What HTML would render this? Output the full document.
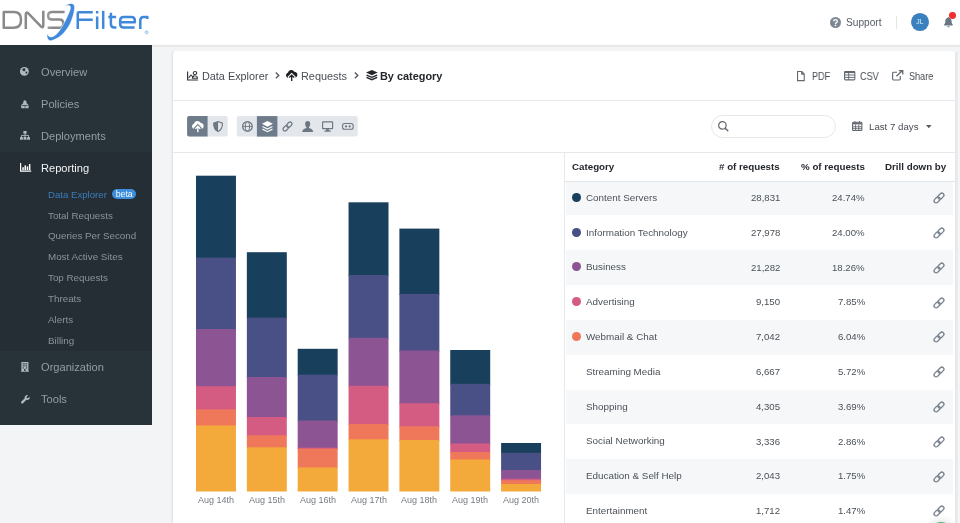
<!DOCTYPE html>
<html>
<head>
<meta charset="utf-8">
<title>DNSFilter - Data Explorer</title>
<style>
*{box-sizing:border-box;margin:0;padding:0}
html,body{width:960px;height:523px;overflow:hidden}
body{position:relative;background:#f3f4f6;font-family:"Liberation Sans",sans-serif;color:#4a5058}
svg{display:block;overflow:visible;position:absolute}
#hdr{position:absolute;left:0;top:0;width:960px;height:45px;background:#fff}
#hdrline{position:absolute;left:0;top:45px;width:960px;height:2px;background:linear-gradient(#e3e4e5,#ebecee)}
#side{position:absolute;left:0;top:45px;width:152px;height:379.7px;background:#283339}
#sidedark{position:absolute;left:0;top:107px;width:152px;height:199px;background:#252e34}
.mi{position:absolute;left:41.3px;font-size:11.1px;line-height:12px;color:#939da4;white-space:nowrap}
.mi.on{color:#f2f4f5}
.si{position:absolute;left:48.3px;font-size:9.8px;line-height:11px;color:#8a939a;white-space:nowrap}
.si.on{color:#3b7dbc;font-size:9.65px}
#card{position:absolute;left:173px;top:51px;width:782px;height:490px;background:#fff;border-radius:3px;box-shadow:-1.5px 0 0 #e3e6e9}
.t,.mi,.si,.th,.row div,.xl{will-change:transform}
.hl{position:absolute;left:173px;width:782px;height:1px;background:#e6e9ec}
.t{position:absolute;white-space:nowrap;line-height:12px}
.bc{font-size:10.8px;color:#3c4248}
.ex{font-size:10.3px;color:#474d54;transform:scaleX(.885);transform-origin:0 50%}
.btn{position:absolute;top:116.3px;height:20.2px;background:#e3e7eb}
.btn.on{background:#6d7b8a}
.th{position:absolute;top:161.1px;font-size:9.75px;line-height:12px;font-weight:bold;color:#23272c;white-space:nowrap}
.row{position:absolute;left:566.3px;width:387.1px;height:34.8px}
.row.g{background:#f5f7f9}
.row .dot{position:absolute;left:6px;top:12.2px;width:8.8px;height:8.8px;border-radius:50%}
.row .c{position:absolute;left:20px;top:11.2px;font-size:9.85px;line-height:12px;color:#4b5158;white-space:nowrap}
.row .n{position:absolute;right:173.5px;top:11.4px;font-size:9.6px;line-height:12px;color:#4b5158;white-space:nowrap}
.row .p{position:absolute;right:88.6px;top:11.4px;font-size:9.6px;line-height:12px;color:#4b5158;white-space:nowrap}
.row svg{left:366.3px;top:11.5px}
.xl{position:absolute;top:495.1px;width:60px;text-align:center;font-size:9px;line-height:11px;color:#777c82;white-space:nowrap}
</style>
</head>
<body>
<div id="hdr"></div><div id="hdrline"></div>
<svg id="logo" style="left:0;top:0" width="160" height="45" viewBox="0 0 160 45">
<defs><linearGradient id="sg" gradientUnits="userSpaceOnUse" x1="46" y1="0" x2="66" y2="0"><stop offset="0" stop-color="#8a8a8a" stop-opacity=".75"/><stop offset=".3" stop-color="#8a8a8a"/></linearGradient></defs>
<g fill="none" stroke="#8a8a8a" stroke-width="2.5" stroke-linejoin="round">
<path d="M3.75,27.65 V12.05 H13.6 Q20.95,12.05 20.95,19 V20.7 Q20.95,27.65 13.6,27.65 Z"/>
<path d="M25.8,28.9 V14.4 Q25.8,11.2 28.3,13.3 L40.9,26.3 Q43.3,28.5 43.3,25.3 V10.8"/>
<path stroke="url(#sg)" d="M64.6,12.1 H52 Q48.1,12.1 48.1,15.85 Q48.1,19.6 52,19.6 H59.4 Q63.3,19.6 63.3,23.65 Q63.3,27.7 59.4,27.7 H47.6"/>
</g>
<path fill="#3f88da" stroke="#fff" stroke-width=".6" d="M64.3,6.3 C66.5,4.6 69.5,3.2 71.5,3.4 C74,3.7 75,5.5 74.6,8.5 C74,13.5 72.5,18.5 70.5,23 C67.5,29.5 62,36 56.5,38.6 C54,39.9 52,40.9 50.5,40.8 C47.5,40.5 46.5,36.5 47.1,33.4 C47.3,34.8 48.5,36.6 50.9,36.9 C54,37 58,33.5 61.5,27.5 C64.5,22.5 68,15.5 70,10 C70.8,7.5 70.5,5.9 69,5.6 C67.5,5.4 66,5.8 64.3,6.3 Z"/>
<g fill="none" stroke="#3f88da" stroke-width="2.5" stroke-linejoin="round">
<path d="M77.75,28.9 V13.6 Q77.75,12.25 79.1,12.25 H92.75 M77.75,19.85 H92.75"/>
<path d="M97.15,28.9 V16.4 M97.15,13.5 V11"/>
<path d="M103.2,28.85 V10.8"/>
<path d="M110.9,12.7 V24.1 Q110.9,27.55 114.35,27.55 H116.4 M108.3,17.05 H116.1"/>
<path d="M120.15,22.3 H134.85 V20.5 Q134.85,17.05 131.4,17.05 H123.6 Q120.15,17.05 120.15,20.5 V24.05 Q120.15,27.5 123.6,27.5 H134.6"/>
<path d="M140.3,28.9 V20.5 Q140.3,17.05 143.75,17.05 H147.35 V19"/>
</g>
<circle cx="146.6" cy="32.3" r="1.5" fill="#d6e6f8" stroke="#8fbbea" stroke-width=".8"/>
</svg>
<svg style="left:829.8px;top:16.8px" width="11" height="11" viewBox="0 0 11 11"><circle cx="5.5" cy="5.5" r="5.5" fill="#7d8893"/><path d="M3.7,4.3 Q3.7,2.6 5.5,2.6 Q7.3,2.6 7.3,4.2 Q7.3,5.2 6.3,5.7 Q5.5,6.1 5.5,6.9" fill="none" stroke="#fff" stroke-width="1.3"/><circle cx="5.5" cy="8.4" r=".8" fill="#fff"/></svg>
<div class="t" style="left:846.2px;top:16.7px;font-size:10.15px;color:#555b62">Support</div>
<div style="position:absolute;left:896px;top:16px;width:1px;height:12.5px;background:#e3e6e9"></div>
<div style="position:absolute;left:910.6px;top:13px;width:17.9px;height:17.9px;border-radius:50%;background:#3a80be;color:#e8f1f9;font-size:6.8px;line-height:18.2px;will-change:transform;text-align:center;letter-spacing:.2px">JL</div>
<svg style="left:943.7px;top:17.2px" width="8.9" height="10.4" viewBox="0 0 9.6 11.2"><path fill="#6a7683" d="M4.8,0 C5.3,0 5.6,.4 5.6,.9 C7.3,1.3 8.2,2.8 8.2,4.6 C8.2,6.6 8.7,7.5 9.4,8.2 C9.8,8.6 9.5,9.2 9,9.2 H.6 C.1,9.2 -.2,8.6 .2,8.2 C.9,7.5 1.4,6.6 1.4,4.6 C1.4,2.8 2.3,1.3 4,.9 C4,.4 4.3,0 4.8,0 Z M3.5,9.9 H6.1 C6.1,10.6 5.5,11.2 4.8,11.2 C4.1,11.2 3.5,10.6 3.5,9.9 Z"/></svg>
<div style="position:absolute;left:949px;top:11.9px;width:6.9px;height:6.9px;border-radius:50%;background:#f12c2c"></div>
<div id="side"><div id="sidedark"></div></div>
<div class="mi" style="top:65.8px">Overview</div>
<div class="mi" style="top:98.0px">Policies</div>
<div class="mi" style="top:130.1px">Deployments</div>
<div class="mi on" style="top:162.1px">Reporting</div>
<div class="mi" style="top:360.9px">Organization</div>
<div class="mi" style="top:393.1px">Tools</div>
<div class="si on" style="top:188.7px">Data Explorer</div>
<div class="si" style="top:209.5px">Total Requests</div>
<div class="si" style="top:230.4px">Queries Per Second</div>
<div class="si" style="top:251.2px">Most Active Sites</div>
<div class="si" style="top:272.1px">Top Requests</div>
<div class="si" style="top:292.9px">Threats</div>
<div class="si" style="top:313.8px">Alerts</div>
<div class="si" style="top:334.6px">Billing</div>
<div style="position:absolute;left:112px;top:189.3px;width:24.4px;height:10.4px;border-radius:5.2px;background:#3d8edb;color:#f4f9fe;font-size:8.8px;line-height:11px;will-change:transform;text-align:center">beta</div>
<svg style="left:20.3px;top:67.4px" width="8.8" height="8.8" viewBox="0 0 10 10"><circle cx="5" cy="5" r="5" fill="#b1b9be"/><path fill="#283339" d="M3.2,1.6 L5.6,1.4 L6.6,2.6 L5.6,3.2 L5.9,4.3 L4.6,5.2 L3.6,4.4 L2.4,3.6 Z M6.6,5.2 L8.3,5.4 L8.4,6.6 L7.2,8 L6.2,6.8 Z"/></svg>
<svg style="left:20.9px;top:99.5px" width="7.8" height="8.3" viewBox="0 0 9 10" preserveAspectRatio="none"><path fill="#b1b9be" d="M2.6,3.9 V2.6 Q2.6,.4 4.5,.4 Q6.4,.4 6.4,2.6 V3.9 Q8.6,4.6 8.8,7.2 V9.2 Q8.8,9.8 8.2,9.8 H.8 Q.2,9.8 .2,9.2 V7.2 Q.4,4.6 2.6,3.9 Z"/><path d="M1.2,6.6 H7.8" stroke="#283339" stroke-width=".9"/><path d="M4.5,6.8 V9.8" stroke="#283339" stroke-width=".7"/></svg>
<svg style="left:20.2px;top:130.6px" width="10" height="9" viewBox="0 0 10 9"><g fill="#b1b9be"><rect x="3.4" y="0" width="3.2" height="2.8" rx=".4"/><rect x="0" y="6" width="2.9" height="2.8" rx=".4"/><rect x="3.55" y="6" width="2.9" height="2.8" rx=".4"/><rect x="7.1" y="6" width="2.9" height="2.8" rx=".4"/></g><path d="M5,2.8 V6 M1.45,6 V4.4 H8.55 V6" fill="none" stroke="#b1b9be" stroke-width=".9"/></svg>
<svg style="left:20px;top:163.4px" width="11.2" height="8.8" viewBox="0 0 11.2 8.8"><path d="M.6,0 V8.2 H11.2" fill="none" stroke="#fff" stroke-width="1.2"/><g fill="#fff"><rect x="2.3" y="4.2" width="1.5" height="2.9"/><rect x="4.5" y="2.4" width="1.5" height="4.7"/><rect x="6.7" y="3.4" width="1.5" height="3.7"/><rect x="8.9" y="1" width="1.5" height="6.1"/></g></svg>
<svg style="left:21px;top:361.700px" width="7.800" height="9.700" viewBox="0 0 8 9.4" preserveAspectRatio="none"><path fill="#b1b9be" d="M.4,0 H7.6 V8.8 H8 V9.4 H0 V8.8 H.4 Z"/><g fill="#283339"><rect x="1.7" y="1.2" width="1.2" height="1.1"/><rect x="3.4" y="1.2" width="1.2" height="1.1"/><rect x="5.1" y="1.2" width="1.2" height="1.1"/><rect x="1.7" y="3.2" width="1.2" height="1.1"/><rect x="3.4" y="3.2" width="1.2" height="1.1"/><rect x="5.1" y="3.2" width="1.2" height="1.1"/><rect x="1.7" y="5.2" width="1.2" height="1.1"/><rect x="5.1" y="5.2" width="1.2" height="1.1"/><rect x="3.3" y="6.6" width="1.4" height="2.2"/></g></svg>
<svg style="left:20.7px;top:394.7px" width="9" height="8.600" viewBox="0 0 9.6 9"><path fill="#b1b9be" d="M9.4,1.9 C9.7,3.2 9,4.5 7.8,5 C7.1,5.3 6.4,5.3 5.8,5.1 L2.2,8.6 C1.7,9.1 .9,9.1 .4,8.6 C-.1,8.1 -.1,7.3 .4,6.8 L4,3.3 C3.7,2.3 4,1.3 4.8,.6 C5.6,-.1 6.700,-.2 7.600,.1 L5.900,1.800 L6.200,3.100 L7.500,3.400 Z"/></svg>
<div id="card"></div>
<div class="hl" style="top:100px"></div><div class="hl" style="top:152px"></div>
<div style="position:absolute;left:564px;top:153px;width:1px;height:380px;background:#e6e9ec"></div>
<svg style="left:187px;top:70.8px" width="11.2" height="9.600" viewBox="0 0 11.2 10.6" preserveAspectRatio="none"><path d="M.6,.6 V10 H11" fill="none" stroke="#2f343a" stroke-width="1.15"/><path d="M1.6,7.6 L4,4.4 L5.8,6.4 L7.2,5.2" fill="none" stroke="#2f343a" stroke-width="1.05"/><circle cx="8" cy="2.3" r="1.75" fill="none" stroke="#2f343a" stroke-width="1.05"/><path d="M5.4,8 Q5.6,5.4 8,5.4 Q10.4,5.4 10.6,8 Z" fill="none" stroke="#2f343a" stroke-width="1.05"/></svg>
<div class="t bc" style="left:202.3px;top:70.1px;font-size:10.85px;color:#454b52">Data Explorer</div>
<svg style="left:275.3px;top:72.2px" width="4.7" height="6.8" viewBox="0 0 4.7 6.8"><path d="M.8,.6 L3.800,3.400 L.8,6.200" fill="none" stroke="#555b62" stroke-width="1.4"/></svg>
<svg style="left:286.3px;top:69.5px" width="11.4" height="11.1" viewBox="0 0 11.4 11.1"><path fill="#1d2126" d="M2.800,7.900 C1.200,7.900 0,6.700 0,5.200 C0,4 .8,3 2,2.700 C2.200,1.200 3.600,0 5.200,0 C6.500,0 7.600,.7 8.200,1.700 C9.900,1.700 11.400,3 11.400,4.800 C11.400,6.500 10.100,7.900 8.500,7.900 Z"/><path d="M5.700,11.600 V5 M2.500,8 L5.700,4.800 L8.900,8" fill="none" stroke="#fff" stroke-width="2.9" stroke-linejoin="miter"/><path d="M5.700,11 V5.200 M3.300,7.500 L5.700,5.100 L8.100,7.500" fill="none" stroke="#1d2126" stroke-width="1.35"/></svg>
<div class="t bc" style="left:301.2px;top:69.7px;font-size:10.9px;color:#4a5057">Requests</div>
<svg style="left:354.4px;top:72.2px" width="4.7" height="6.800" viewBox="0 0 4.7 6.8"><path d="M.8,.6 L3.800,3.400 L.8,6.200" fill="none" stroke="#555b62" stroke-width="1.4"/></svg>
<svg style="left:365.6px;top:69.7px" width="11.7" height="10.1" viewBox="0 0 11.6 10.6" preserveAspectRatio="none"><path fill="#23272c" d="M5.800,0 L11.600,2.700 L5.800,5.400 L0,2.700 Z"/><path d="M.5,5.300 L5.800,7.700 L11.100,5.300 M.5,7.700 L5.800,10.100 L11.100,7.700" fill="none" stroke="#23272c" stroke-width="1.5"/></svg>
<div class="t bc" style="left:380.4px;top:69.7px;font-weight:bold;color:#23272c;font-size:10.9px">By category</div>
<svg style="left:796.8px;top:70.6px" width="7.8" height="10.2" viewBox="0 0 7.8 10.2"><path d="M.55,.55 H4.800 L7.250,3 V9.650 H.55 Z M4.700,.7 V3.100 H7.100" fill="none" stroke="#626970" stroke-width="1.1"/></svg>
<div class="t ex" style="left:811.6px;top:70.8px">PDF</div>
<svg style="left:843.6px;top:71.2px" width="11.4" height="9.4" viewBox="0 0 11.4 9.4"><rect x=".55" y=".55" width="10.300" height="8.300" rx=".9" fill="none" stroke="#626970" stroke-width="1.1"/><path d="M.5,1.300 H10.900" stroke="#626970" stroke-width="1.600"/><path d="M.5,4 H10.900 M.5,6.400 H10.900 M4.700,2 V8.800" fill="none" stroke="#626970" stroke-width=".95"/></svg>
<div class="t ex" style="left:859.8px;top:70.8px">CSV</div>
<svg style="left:892.4px;top:70.4px" width="11.4" height="10.600" viewBox="0 0 11.4 10.600"><path d="M5,2.300 H1.500 Q.6,2.300 .6,3.200 V9.100 Q.6,10 1.500,10 H7.400 Q8.300,10 8.300,9.100 V6" fill="none" stroke="#626970" stroke-width="1.15"/><path d="M4.400,6.300 L10.300,.7 M6.900,.65 H10.750 V4.500" fill="none" stroke="#626970" stroke-width="1.3"/></svg>
<div class="t ex" style="left:908.6px;top:70.8px">Share</div>
<svg style="left:0;top:0" width="960" height="160" viewBox="0 0 960 160"><rect x="187.1" y="116.1" width="40.6" height="20.5" rx="2" fill="#e3e7eb"/><path d="M189.1,116.1 H207.6 V136.6 H189.1 Q187.1,136.6 187.1,134.6 V118.1 Q187.1,116.1 189.1,116.1 Z" fill="#6d7b8a"/><rect x="236.8" y="116.1" width="120.9" height="20.5" rx="2" fill="#e3e7eb"/><rect x="256.9" y="116.1" width="20.5" height="20.5" fill="#6d7b8a"/></svg>
<svg style="left:191.7px;top:121.0px" width="11.7" height="11.4" viewBox="0 0 11.4 11.1"><path fill="#fff" d="M2.800,7.900 C1.200,7.900 0,6.700 0,5.200 C0,4 .8,3 2,2.700 C2.200,1.200 3.600,0 5.200,0 C6.500,0 7.600,.7 8.200,1.700 C9.900,1.700 11.400,3 11.400,4.800 C11.400,6.500 10.100,7.900 8.500,7.900 Z"/><path d="M5.700,11.600 V5 M2.500,8 L5.700,4.800 L8.900,8" fill="none" stroke="#6d7b8a" stroke-width="2.9" stroke-linejoin="miter"/><path d="M5.700,11 V5.200 M3.300,7.500 L5.700,5.100 L8.100,7.500" fill="none" stroke="#fff" stroke-width="1.35"/></svg>
<svg style="left:213.1px;top:121px" width="10.1" height="11.2" viewBox="0 0 10.1 11.2"><path d="M5.05,.6 L9.5,2.2 C9.5,6.3 8,9.100 5.05,10.600 C2.100,9.100 .6,6.300 .6,2.200 Z" fill="none" stroke="#6c7782" stroke-width="1.1"/><path fill="#6c7782" d="M5.05,.6 V10.600 C2.100,9.100 .6,6.300 .6,2.200 Z"/></svg>
<svg style="left:241.5px;top:121px" width="10.9" height="10.9" viewBox="0 0 10.9 10.9"><g fill="none" stroke="#6c7782"><circle cx="5.45" cy="5.45" r="4.800" stroke-width="1.25"/><ellipse cx="5.45" cy="5.45" rx="2.100" ry="4.800" stroke-width="1"/><path d="M.8,5.450 H10.100" stroke-width=".9"/></g></svg>
<svg style="left:261.8px;top:121.0px" width="10.9" height="11.2" viewBox="0 0 11.6 10.6" preserveAspectRatio="none"><path fill="#fff" d="M5.800,0 L11.600,2.700 L5.800,5.400 L0,2.700 Z"/><path d="M.5,5.300 L5.800,7.700 L11.100,5.300 M.5,7.700 L5.800,10.100 L11.100,7.700" fill="none" stroke="#fff" stroke-width="1.1"/></svg>
<svg style="left:282.0px;top:121.0px" width="11.0" height="11.0" viewBox="0 0 12 12"><g fill="none" stroke="#6c7782" stroke-width="1.3" transform="rotate(-45 6 6)"><rect x="-0.1" y="3.9" width="6.7" height="4.2" rx="2.1"/><rect x="5.4" y="3.9" width="6.7" height="4.2" rx="2.1"/></g></svg>
<svg style="left:301.8px;top:121px" width="11.4" height="11" viewBox="0 0 10.4 10.4"><path fill="#6c7782" d="M5.200,0 C6.800,0 7.600,1.200 7.600,2.900 C7.600,4.200 7.100,5.300 6.400,5.900 V6.600 C8.400,7.100 10.100,7.900 10.400,10.400 H0 C.3,7.900 2,7.100 4,6.600 V5.900 C3.300,5.300 2.800,4.200 2.800,2.900 C2.800,1.200 3.600,0 5.200,0 Z"/></svg>
<svg style="left:322.1px;top:121px" width="11.200" height="11" viewBox="0 0 11.400 10.800"><rect x=".6" y=".6" width="10.200" height="7" rx=".5" fill="none" stroke="#6c7782" stroke-width="1.2"/><path fill="#6c7782" d="M4.500,7.600 H6.900 L7.200,9.600 H8.900 V10.800 H2.500 V9.600 H4.200 Z"/></svg>
<svg style="left:342.2px;top:123.1px" width="11.700" height="6.800" viewBox="0 0 11.700 6.800"><rect x=".55" y=".55" width="10.600" height="5.700" rx="2.100" fill="none" stroke="#6c7782" stroke-width="1.100"/><circle cx="4" cy="3.400" r="1.100" fill="#6c7782"/><circle cx="7.700" cy="3.400" r="1.100" fill="#6c7782"/></svg>
<div style="position:absolute;left:711px;top:115px;width:125.4px;height:23px;border-radius:11.5px;border:1px solid #e4e7eb;background:#fff"></div>
<svg style="left:717.5px;top:121px" width="10.600" height="10.600" viewBox="0 0 10.600 10.600"><circle cx="4.400" cy="4.400" r="3.750" fill="none" stroke="#626970" stroke-width="1.250"/><path d="M7.200,7.200 L9.800,9.800" stroke="#626970" stroke-width="1.500" stroke-linecap="round"/></svg>
<svg style="left:852.1px;top:120.9px" width="10.400" height="10.100" viewBox="0 0 10.400 10.100"><rect x=".55" y="1.300" width="9.300" height="8.250" rx=".8" fill="none" stroke="#626970" stroke-width="1.1"/><path d="M.5,2.500 H9.900" stroke="#626970" stroke-width="1.700"/><path d="M.5,5.800 H9.900 M.5,7.700 H9.900 M3.600,3.400 V9.500 M6.800,3.400 V9.500 M2.900,0 V1.500 M7.500,0 V1.500" fill="none" stroke="#626970" stroke-width=".9"/></svg>
<div class="t" style="left:868.5px;top:120.7px;font-size:9.7px;color:#474d54">Last 7 days</div>
<svg style="left:926.2px;top:125.2px" width="5.600" height="3.200" viewBox="0 0 5.600 3.200"><path fill="#555c63" d="M0,0 H5.600 L2.800,3.200 Z"/></svg>
<div class="xl" style="left:185.97px">Aug 14th</div>
<div class="xl" style="left:236.82px">Aug 15th</div>
<div class="xl" style="left:287.68px">Aug 16th</div>
<div class="xl" style="left:338.53px">Aug 17th</div>
<div class="xl" style="left:389.38px">Aug 18th</div>
<div class="xl" style="left:440.23px">Aug 19th</div>
<div class="xl" style="left:491.08px">Aug 20th</div>
<svg style="left:0;top:0" width="960" height="523" viewBox="0 0 960 523"><rect x="196.00" y="175.70" width="39.95" height="82.90" fill="#183f5b"/><rect x="196.00" y="257.60" width="39.95" height="72.40" fill="#495085"/><rect x="196.00" y="329.00" width="39.95" height="58.20" fill="#8c5493"/><rect x="196.00" y="386.20" width="39.95" height="24.20" fill="#d45c82"/><rect x="196.00" y="409.40" width="39.95" height="17.10" fill="#f0785a"/><rect x="196.00" y="425.50" width="39.95" height="66.00" fill="#f4a93b"/><rect x="246.85" y="252.20" width="39.95" height="66.40" fill="#183f5b"/><rect x="246.85" y="317.60" width="39.95" height="60.40" fill="#495085"/><rect x="246.85" y="377.00" width="39.95" height="41.00" fill="#8c5493"/><rect x="246.85" y="417.00" width="39.95" height="19.30" fill="#d45c82"/><rect x="246.85" y="435.30" width="39.95" height="13.00" fill="#f0785a"/><rect x="246.85" y="447.30" width="39.95" height="44.20" fill="#f4a93b"/><rect x="297.70" y="348.80" width="39.95" height="26.80" fill="#183f5b"/><rect x="297.70" y="374.60" width="39.95" height="46.90" fill="#495085"/><rect x="297.70" y="420.50" width="39.95" height="28.20" fill="#8c5493"/><rect x="297.70" y="447.70" width="39.95" height="2.00" fill="#d45c82"/><rect x="297.70" y="448.70" width="39.95" height="19.70" fill="#f0785a"/><rect x="297.70" y="467.40" width="39.95" height="24.10" fill="#f4a93b"/><rect x="348.55" y="202.30" width="39.95" height="73.70" fill="#183f5b"/><rect x="348.55" y="275.00" width="39.95" height="63.80" fill="#495085"/><rect x="348.55" y="337.80" width="39.95" height="49.00" fill="#8c5493"/><rect x="348.55" y="385.80" width="39.95" height="39.20" fill="#d45c82"/><rect x="348.55" y="424.00" width="39.95" height="16.30" fill="#f0785a"/><rect x="348.55" y="439.30" width="39.95" height="52.20" fill="#f4a93b"/><rect x="399.40" y="228.60" width="39.95" height="66.30" fill="#183f5b"/><rect x="399.40" y="293.90" width="39.95" height="57.60" fill="#495085"/><rect x="399.40" y="350.50" width="39.95" height="53.70" fill="#8c5493"/><rect x="399.40" y="403.20" width="39.95" height="24.10" fill="#d45c82"/><rect x="399.40" y="426.30" width="39.95" height="14.70" fill="#f0785a"/><rect x="399.40" y="440.00" width="39.95" height="51.50" fill="#f4a93b"/><rect x="450.25" y="350.00" width="39.95" height="34.80" fill="#183f5b"/><rect x="450.25" y="383.80" width="39.95" height="32.50" fill="#495085"/><rect x="450.25" y="415.30" width="39.95" height="29.20" fill="#8c5493"/><rect x="450.25" y="443.50" width="39.95" height="9.50" fill="#d45c82"/><rect x="450.25" y="452.00" width="39.95" height="8.50" fill="#f0785a"/><rect x="450.25" y="459.50" width="39.95" height="32.00" fill="#f4a93b"/><rect x="501.10" y="443.00" width="39.95" height="10.80" fill="#183f5b"/><rect x="501.10" y="452.80" width="39.95" height="18.20" fill="#495085"/><rect x="501.10" y="470.00" width="39.95" height="9.80" fill="#8c5493"/><rect x="501.10" y="478.80" width="39.95" height="2.40" fill="#d45c82"/><rect x="501.10" y="480.20" width="39.95" height="4.80" fill="#f0785a"/><rect x="501.10" y="484.00" width="39.95" height="7.50" fill="#f4a93b"/></svg>
<div class="th" style="left:572.3px">Category</div>
<div class="th" style="right:180.2px"># of requests</div>
<div class="th" style="right:95.5px">% of requests</div>
<div class="th" style="right:13.7px">Drill down by</div>
<div class="row g" style="top:180.7px"><div class="dot" style="background:#183f5b"></div><div class="c">Content Servers</div><div class="n">28,831</div><div class="p">24.74%</div><svg width="12.0" height="12.0" viewBox="0 0 12 12"><g fill="none" stroke="#7a848e" stroke-width="1.3" transform="rotate(-45 6 6)"><rect x="-0.1" y="3.9" width="6.7" height="4.2" rx="2.1"/><rect x="5.4" y="3.9" width="6.7" height="4.2" rx="2.1"/></g></svg></div>
<div class="row" style="top:215.5px"><div class="dot" style="background:#495085"></div><div class="c">Information Technology</div><div class="n">27,978</div><div class="p">24.00%</div><svg width="12.0" height="12.0" viewBox="0 0 12 12"><g fill="none" stroke="#7a848e" stroke-width="1.3" transform="rotate(-45 6 6)"><rect x="-0.1" y="3.9" width="6.7" height="4.2" rx="2.1"/><rect x="5.4" y="3.9" width="6.7" height="4.2" rx="2.1"/></g></svg></div>
<div class="row g" style="top:250.3px"><div class="dot" style="background:#8c5493"></div><div class="c">Business</div><div class="n">21,282</div><div class="p">18.26%</div><svg width="12.0" height="12.0" viewBox="0 0 12 12"><g fill="none" stroke="#7a848e" stroke-width="1.3" transform="rotate(-45 6 6)"><rect x="-0.1" y="3.9" width="6.7" height="4.2" rx="2.1"/><rect x="5.4" y="3.9" width="6.7" height="4.2" rx="2.1"/></g></svg></div>
<div class="row" style="top:285.1px"><div class="dot" style="background:#d45c82"></div><div class="c">Advertising</div><div class="n">9,150</div><div class="p">7.85%</div><svg width="12.0" height="12.0" viewBox="0 0 12 12"><g fill="none" stroke="#7a848e" stroke-width="1.3" transform="rotate(-45 6 6)"><rect x="-0.1" y="3.9" width="6.7" height="4.2" rx="2.1"/><rect x="5.4" y="3.9" width="6.7" height="4.2" rx="2.1"/></g></svg></div>
<div class="row g" style="top:319.9px"><div class="dot" style="background:#f0785a"></div><div class="c">Webmail &amp; Chat</div><div class="n">7,042</div><div class="p">6.04%</div><svg width="12.0" height="12.0" viewBox="0 0 12 12"><g fill="none" stroke="#7a848e" stroke-width="1.3" transform="rotate(-45 6 6)"><rect x="-0.1" y="3.9" width="6.7" height="4.2" rx="2.1"/><rect x="5.4" y="3.9" width="6.7" height="4.2" rx="2.1"/></g></svg></div>
<div class="row" style="top:354.7px"><div class="c">Streaming Media</div><div class="n">6,667</div><div class="p">5.72%</div><svg width="12.0" height="12.0" viewBox="0 0 12 12"><g fill="none" stroke="#7a848e" stroke-width="1.3" transform="rotate(-45 6 6)"><rect x="-0.1" y="3.9" width="6.7" height="4.2" rx="2.1"/><rect x="5.4" y="3.9" width="6.7" height="4.2" rx="2.1"/></g></svg></div>
<div class="row g" style="top:389.5px"><div class="c">Shopping</div><div class="n">4,305</div><div class="p">3.69%</div><svg width="12.0" height="12.0" viewBox="0 0 12 12"><g fill="none" stroke="#7a848e" stroke-width="1.3" transform="rotate(-45 6 6)"><rect x="-0.1" y="3.9" width="6.7" height="4.2" rx="2.1"/><rect x="5.4" y="3.9" width="6.7" height="4.2" rx="2.1"/></g></svg></div>
<div class="row" style="top:424.3px"><div class="c">Social Networking</div><div class="n">3,336</div><div class="p">2.86%</div><svg width="12.0" height="12.0" viewBox="0 0 12 12"><g fill="none" stroke="#7a848e" stroke-width="1.3" transform="rotate(-45 6 6)"><rect x="-0.1" y="3.9" width="6.7" height="4.2" rx="2.1"/><rect x="5.4" y="3.9" width="6.7" height="4.2" rx="2.1"/></g></svg></div>
<div class="row g" style="top:459.1px"><div class="c">Education &amp; Self Help</div><div class="n">2,043</div><div class="p">1.75%</div><svg width="12.0" height="12.0" viewBox="0 0 12 12"><g fill="none" stroke="#7a848e" stroke-width="1.3" transform="rotate(-45 6 6)"><rect x="-0.1" y="3.9" width="6.7" height="4.2" rx="2.1"/><rect x="5.4" y="3.9" width="6.7" height="4.2" rx="2.1"/></g></svg></div>
<div class="row" style="top:493.9px"><div class="c">Entertainment</div><div class="n">1,712</div><div class="p">1.47%</div><svg width="12.0" height="12.0" viewBox="0 0 12 12"><g fill="none" stroke="#7a848e" stroke-width="1.3" transform="rotate(-45 6 6)"><rect x="-0.1" y="3.9" width="6.7" height="4.2" rx="2.1"/><rect x="5.4" y="3.9" width="6.7" height="4.2" rx="2.1"/></g></svg></div>
<div class="hl" style="left:565px;width:390px;top:181px;background:#e2e5e8"></div>
<div style="position:absolute;left:955px;top:52px;width:2.6px;height:471px;background:linear-gradient(to right,#e3e5e8,#eceef0)"></div>
<div style="position:absolute;left:929.5px;top:521.8px;width:22px;height:22px;border-radius:50%;background:#4db87a;box-shadow:0 0 8px rgba(60,70,80,.25)"></div>
</body>
</html>
